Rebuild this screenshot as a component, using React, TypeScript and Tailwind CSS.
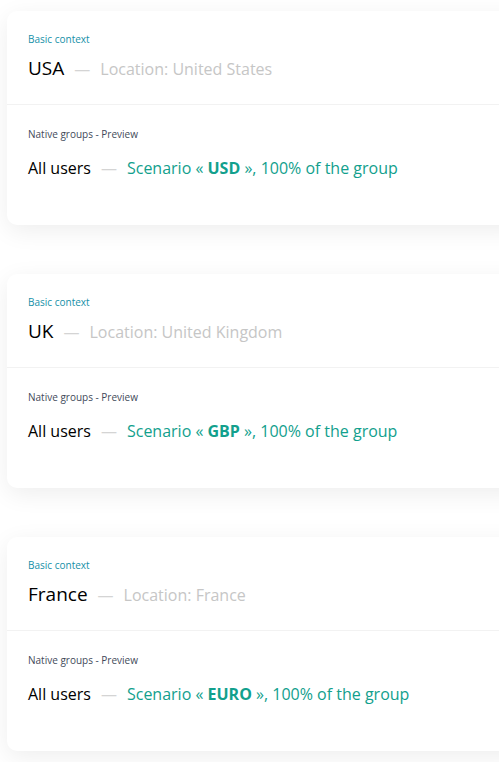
const contexts = [
  { name: 'USA', location: 'United States', scenario: 'USD' },
  { name: 'UK', location: 'United Kingdom', scenario: 'GBP' },
  { name: 'France', location: 'France', scenario: 'EURO' },
]

function ContextCard({ name, location, scenario }: { name: string; location: string; scenario: string }) {
  return (
    <div className="w-[520px] rounded-[10px] bg-white shadow-[0_6px_24px_rgba(0,0,0,0.07)]">
      <div className="px-[21px] pt-[21px] pb-[23px] border-b border-[#f2f2f2]">
        <p className="text-[10px] leading-[14px] text-[#1690a8]">Basic context</p>
        <p className="mt-[10px] text-[19px] leading-[24px] text-black">
          {name}
          <span className="mx-[10px] text-[16px] text-[#d4d4d4]">—</span>
          <span className="text-[16px] text-[#c6c6c6]">Location: {location}</span>
        </p>
      </div>
      <div className="px-[21px] pt-[22px] pb-[45px]">
        <p className="text-[10px] leading-[14px] text-[#3f4a5a]">Native groups - Preview</p>
        <p className="mt-[15px] text-[16px] leading-[24px] text-black">
          All users
          <span className="mx-[10px] text-[#d4d4d4]">—</span>
          <span className="text-[#12a08d]">
            Scenario « <b className="font-bold">{scenario}</b> », 100% of the group
          </span>
        </p>
      </div>
    </div>
  )
}

export default function App() {
  return (
    <div className="w-[499px] h-[762px] overflow-hidden bg-white font-['Open_Sans',sans-serif]">
      <div className="flex flex-col gap-[49px] pl-[7px] pt-[11px]">
        {contexts.map(c => (
          <ContextCard key={c.name} {...c} />
        ))}
      </div>
    </div>
  )
}
